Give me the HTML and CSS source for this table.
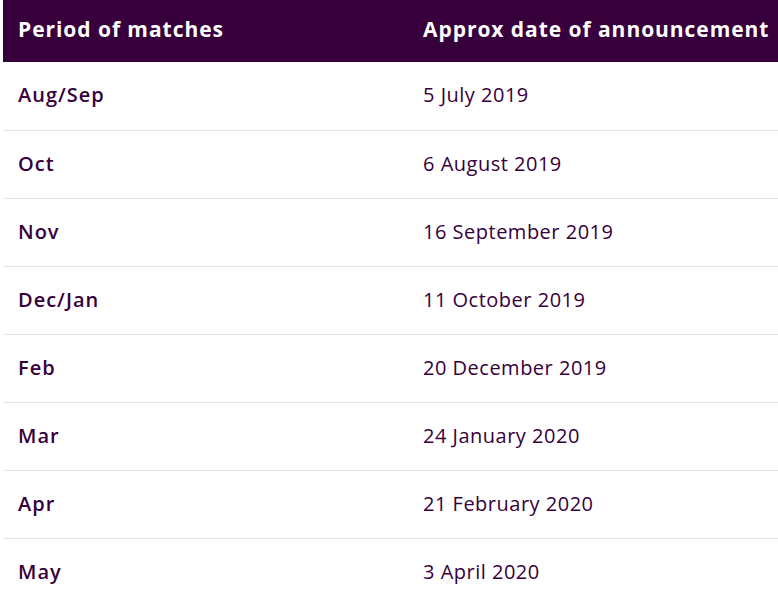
FILE: index.html
```html
<!DOCTYPE html>
<html>
<head>
<meta charset="utf-8">
<link rel="stylesheet" href="styles.css">
</head>
<body>
<div class="wrap">
<table class="schedule">
  <thead>
    <tr><th class="c1">Period of matches</th><th class="c2">Approx date of announcement</th></tr>
  </thead>
  <tbody>
    <tr><td class="c1">Aug/Sep</td><td class="c2">5 July 2019</td></tr>
    <tr><td class="c1">Oct</td><td class="c2">6 August 2019</td></tr>
    <tr><td class="c1">Nov</td><td class="c2">16 September 2019</td></tr>
    <tr><td class="c1">Dec/Jan</td><td class="c2">11 October 2019</td></tr>
    <tr><td class="c1">Feb</td><td class="c2">20 December 2019</td></tr>
    <tr><td class="c1">Mar</td><td class="c2">24 January 2020</td></tr>
    <tr><td class="c1">Apr</td><td class="c2">21 February 2020</td></tr>
    <tr><td class="c1">May</td><td class="c2">3 April 2020</td></tr>
  </tbody>
</table>
</div>
</body>
</html>
```
FILE: styles.css
```css
html, body {
  margin: 0;
  padding: 0;
  background: #ffffff;
}
body {
  font-family: "Open Sans", "Noto Sans", sans-serif;
  color: #37003c;
  overflow: hidden;
}
.wrap {
  padding-left: 3px;
}
.schedule {
  border-collapse: collapse;
  width: 775px;
  table-layout: fixed;
}
.schedule th,
.schedule td {
  text-align: left;
  padding: 0 0 0 15px;
  vertical-align: middle;
  white-space: nowrap;
}
.schedule .c1 {
  width: 405px;
}
.schedule thead th {
  background: #37003c;
  color: #ffffff;
  height: 62px;
  font-size: 21px;
  font-weight: 700;
  letter-spacing: 0.95px;
  padding-bottom: 5px;
  box-sizing: border-box;
}
.schedule tbody td {
  height: 68px;
  box-sizing: border-box;
  border-bottom: 1px solid #e4e4e4;
  font-size: 20px;
  padding-bottom: 2px;
}
.schedule tbody td.c1 {
  font-weight: 600;
  letter-spacing: 1px;
}
.schedule tbody td.c2 {
  font-weight: 400;
  letter-spacing: 0.5px;
}
```
